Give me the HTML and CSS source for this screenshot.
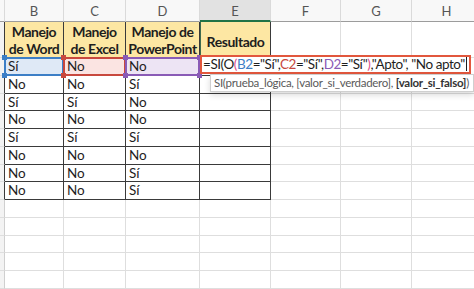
FILE: index.html
```html
<!DOCTYPE html>
<html lang="es">
<head>
    <meta charset="UTF-8">
    <meta name="viewport" content="width=device-width, initial-scale=1.0">
    <title>Hoja - SI(O)</title>
    <link rel="stylesheet" href="styles.css">
</head>
<body>
    <div class="sheet">
        <!-- column letters -->
        <div class="rh ch"></div>
        <div class="ch">B</div>
        <div class="ch">C</div>
        <div class="ch">D</div>
        <div class="ch active">E</div>
        <div class="ch">F</div>
        <div class="ch">G</div>
        <div class="ch">H</div>

        <!-- titles -->
        <div class="rh dark"></div>
        <div class="title">Manejo<br>de Word</div>
        <div class="title">Manejo<br>de Excel</div>
        <div class="title">Manejo de<br>PowerPoint</div>
        <div class="title result">Resultado</div>
        <div class="cell"></div>
        <div class="cell"></div>
        <div class="cell"></div>

        <!-- row 2 (referenced cells) -->
        <div class="rh dark"></div>
        <div class="t ref ref-b">Sí<span class="h tl"></span><span class="h tr"></span><span class="h bl"></span><span class="h br"></span></div>
        <div class="t ref ref-c">No<span class="h tl"></span><span class="h tr"></span><span class="h bl"></span><span class="h br"></span></div>
        <div class="t ref ref-d">No<span class="h tl"></span><span class="h tr"></span><span class="h bl"></span><span class="h br"></span></div>
        <div class="t"></div>
        <div class="cell"></div>
        <div class="cell"></div>
        <div class="cell"></div>

        <div class="rh dark"></div>
        <div class="t">No</div><div class="t">No</div><div class="t">Sí</div><div class="t"></div>
        <div class="cell"></div><div class="cell"></div><div class="cell"></div>

        <div class="rh dark"></div>
        <div class="t">Sí</div><div class="t">Sí</div><div class="t">No</div><div class="t"></div>
        <div class="cell"></div><div class="cell"></div><div class="cell"></div>

        <div class="rh dark"></div>
        <div class="t">No</div><div class="t">No</div><div class="t">No</div><div class="t"></div>
        <div class="cell"></div><div class="cell"></div><div class="cell"></div>

        <div class="rh dark"></div>
        <div class="t">Sí</div><div class="t">Sí</div><div class="t">Sí</div><div class="t"></div>
        <div class="cell"></div><div class="cell"></div><div class="cell"></div>

        <div class="rh dark"></div>
        <div class="t">No</div><div class="t">No</div><div class="t">No</div><div class="t"></div>
        <div class="cell"></div><div class="cell"></div><div class="cell"></div>

        <div class="rh dark"></div>
        <div class="t">No</div><div class="t">No</div><div class="t">Sí</div><div class="t"></div>
        <div class="cell"></div><div class="cell"></div><div class="cell"></div>

        <div class="rh dark"></div>
        <div class="t">No</div><div class="t">No</div><div class="t">Sí</div><div class="t"></div>
        <div class="cell"></div><div class="cell"></div><div class="cell"></div>

        <!-- empty rows -->
        <div class="rh"></div>
        <div class="cell"></div><div class="cell"></div><div class="cell"></div><div class="cell"></div>
        <div class="cell"></div><div class="cell"></div><div class="cell"></div>

        <div class="rh"></div>
        <div class="cell"></div><div class="cell"></div><div class="cell"></div><div class="cell"></div>
        <div class="cell"></div><div class="cell"></div><div class="cell"></div>

        <div class="rh"></div>
        <div class="cell"></div><div class="cell"></div><div class="cell"></div><div class="cell"></div>
        <div class="cell"></div><div class="cell"></div><div class="cell"></div>

        <div class="rh"></div>
        <div class="cell"></div><div class="cell"></div><div class="cell"></div><div class="cell"></div>
        <div class="cell"></div><div class="cell"></div><div class="cell"></div>

        <div class="rh"></div>
        <div class="cell"></div><div class="cell"></div><div class="cell"></div><div class="cell"></div>
        <div class="cell"></div><div class="cell"></div><div class="cell"></div>

        <!-- formula being typed in E2 -->
        <div class="editor">=SI(O<span class="par">(</span><span class="rb">B2</span>="Sí",<span class="rc">C2</span>="Sí",<span class="rd">D2</span>="Sí"<span class="par">)</span>,"Apto", "No apto"<span class="caret"></span></div>
        <div class="tip">SI(prueba_lógica, [valor_si_verdadero], <b>[valor_si_falso]</b>)</div>
    </div>
</body>
</html>
```

FILE: styles.css
```css
* {
    margin: 0;
    padding: 0;
    box-sizing: border-box;
}
body {
    background-color: #ffffff;
    font-family: 'Lato', 'Liberation Sans', sans-serif;
    color: #1e1e1e;
    overflow: hidden;
}
.sheet {
    position: relative;
    display: grid;
    grid-template-columns: 5px 59px 62px 74px 71px 70px 71px 70px;
    grid-template-rows: 22px 36px repeat(13, 17.75px);
    width: 482px;
}
.sheet > div {
    border-right: 1px solid #dedede;
    border-bottom: 1px solid #dedede;
}
.rh {
    background-color: #f3f3f3;
    border-right-color: #cfcfcf !important;
}
.rh.dark {
    border-right-color: #3a3a3a !important;
}
.ch {
    background-color: #f8f8f8;
    color: #555;
    font-size: 13px;
    text-align: center;
    line-height: 22px;
    border-right-color: #dadada !important;
    border-bottom-color: #9c9c9c !important;
}
.ch.active {
    background-color: #e2e2e2;
    border-bottom: 2px solid #217346 !important;
}
.title {
    background-color: #fde7a3;
    font-weight: bold;
    font-size: 14px;
    letter-spacing: -0.45px;
    line-height: 17px;
    text-align: center;
    display: flex;
    align-items: center;
    justify-content: center;
    white-space: nowrap;
    border-right-color: #3a3a3a !important;
    border-bottom-color: #3a3a3a !important;
}
.title.result {
    padding-top: 3px;
    border-left: 1px solid #3f6b4f;
}
.t {
    position: relative;
    font-size: 13.5px;
    line-height: 17px;
    padding-left: 3px;
    border-right-color: #3a3a3a !important;
    border-bottom-color: #3a3a3a !important;
}
.ref::after {
    content: '';
    position: absolute;
    left: -1px;
    right: -1px;
    top: -1px;
    bottom: -1px;
    border: 2px solid var(--ref);
}
.ref-b { --ref: #3d7fc6; background-color: #dfe9f6; }
.ref-c { --ref: #c8483e; background-color: #fbe4e2; }
.ref-d { --ref: #8a5bb6; background-color: #ede4f4; }
.h {
    position: absolute;
    width: 5px;
    height: 5px;
    background-color: var(--ref);
    z-index: 2;
}
.h.tl { left: -3px; top: -3px; }
.h.tr { right: -3px; top: -3px; }
.h.bl { left: -3px; bottom: -3px; }
.h.br { right: -3px; bottom: -3px; }
.editor {
    position: absolute;
    left: 200px;
    top: 55px;
    width: 271px;
    height: 19px;
    border: 2px solid #e2573d !important;
    background-color: #ffffff;
    font-size: 13.5px;
    letter-spacing: -0.45px;
    line-height: 15px;
    padding-left: 1px;
    white-space: nowrap;
    overflow: hidden;
    color: #1e1e1e;
    z-index: 3;
}
.par { color: #e0508a; }
.rb { color: #3d7fc6; }
.rc { color: #c8483e; }
.rd { color: #8a5bb6; }
.caret {
    display: inline-block;
    width: 1px;
    height: 14px;
    margin-left: 1px;
    vertical-align: -2px;
    background-color: #1e1e1e;
}
.tip {
    position: absolute;
    left: 210px;
    top: 74px;
    width: 264px;
    height: 18px;
    background-color: #ffffff;
    border: 1px solid #cfcfcf !important;
    box-shadow: 0 3px 6px rgba(0, 0, 0, 0.15);
    color: #5a5a5a;
    font-size: 11.5px;
    letter-spacing: -0.3px;
    line-height: 16px;
    padding-left: 3px;
    white-space: nowrap;
    overflow: hidden;
    z-index: 3;
}
.tip b {
    color: #333;
}
```
